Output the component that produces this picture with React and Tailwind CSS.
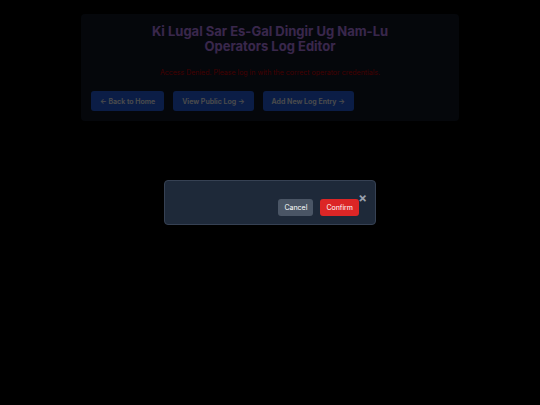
import { useState } from 'react';

const links = [
  { label: '← Back to Home', href: '#home' },
  { label: 'View Public Log →', href: '#log' },
  { label: 'Add New Log Entry →', href: '#new' }
];

function ConfirmModal({ onClose }) {
  return (
    <div className="fixed inset-0 flex items-center justify-center bg-black/70">
      <div
        role="dialog"
        aria-modal="true"
        aria-label="Confirm"
        className="relative w-[212px] max-w-full rounded border border-gray-700 bg-gray-800 px-4 pt-[18px] pb-2"
      >
        <button
          type="button"
          aria-label="Close"
          onClick={onClose}
          className="absolute top-[11px] right-2 text-[13px] leading-[13px] font-bold text-gray-400"
        >
          ×
        </button>
        <div className="flex justify-end gap-[7px]">
          <button
            type="button"
            onClick={onClose}
            className="rounded-[3px] bg-gray-600 px-1.5 py-1 text-[7px] leading-[9px] text-white"
          >
            Cancel
          </button>
          <button
            type="button"
            onClick={onClose}
            className="rounded-[3px] bg-[#dc2626] px-1.5 py-1 text-[7px] leading-[9px] text-white"
          >
            Confirm
          </button>
        </div>
      </div>
    </div>
  );
}

export default function App() {
  const [showModal, setShowModal] = useState(true);

  return (
    <div className="min-h-screen bg-black py-3.5 font-['Inter',sans-serif]">
      <main className="mx-auto w-[70%] rounded bg-[#111827] p-2.5">
        <h1 className="mx-auto w-64 max-w-full text-center text-[13px] leading-[15px] font-bold text-[#c084fc]">
          Ki Lugal Sar Es-Gal Dingir Ug Nam-Lu Operators Log Editor
        </h1>
        <p className="mt-3.5 text-center text-[7px] leading-[10px] text-[#dc0000]">
          Access Denied. Please log in with the correct operator credentials.
        </p>
        <nav className="mt-[13px] flex flex-wrap gap-[9px]">
          {links.map((link) => (
            <a
              key={link.href}
              href={link.href}
              className="rounded-[3px] bg-[#2563eb] px-[9px] pt-1.5 pb-1 text-[7px] leading-[10px] font-semibold text-white"
            >
              {link.label}
            </a>
          ))}
        </nav>
      </main>
      {showModal && <ConfirmModal onClose={() => setShowModal(false)} />}
    </div>
  );
}
